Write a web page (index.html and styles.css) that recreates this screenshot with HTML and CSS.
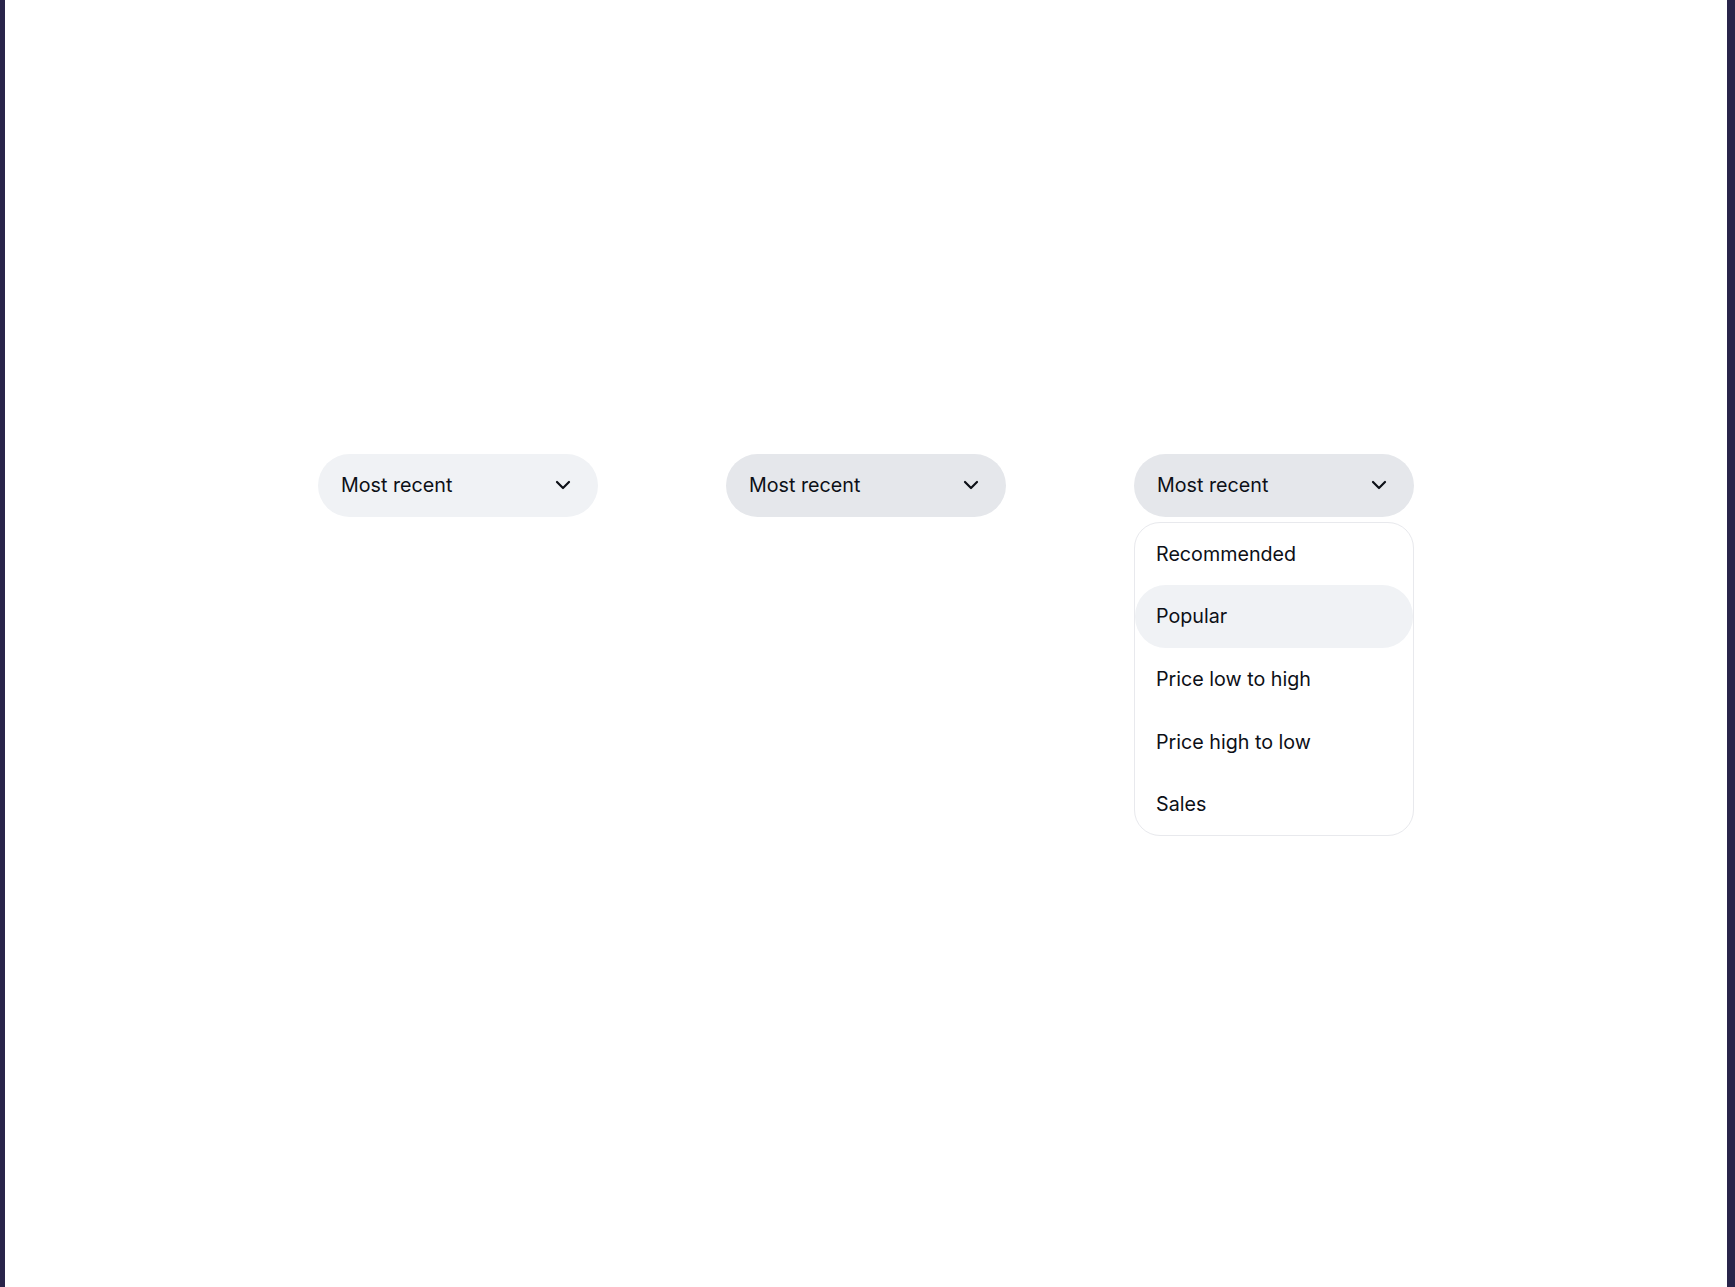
FILE: index.html
```html
<!DOCTYPE html>
<html lang="en">
<head>
<meta charset="utf-8">
<title>Sort dropdowns</title>
<link rel="stylesheet" href="styles.css">
</head>
<body>
<main class="frame">
  <div class="row">
    <div class="col">
      <button class="select select-default" type="button">
        <span class="label">Most recent</span>
        <svg class="chev" viewBox="0 0 24 24" width="24" height="24" aria-hidden="true"><path d="M6 9l6 6 6-6" fill="none" stroke="currentColor" stroke-width="2.2" stroke-linecap="round" stroke-linejoin="round"/></svg>
      </button>
    </div>
    <div class="col">
      <button class="select select-hover" type="button">
        <span class="label">Most recent</span>
        <svg class="chev" viewBox="0 0 24 24" width="24" height="24" aria-hidden="true"><path d="M6 9l6 6 6-6" fill="none" stroke="currentColor" stroke-width="2.2" stroke-linecap="round" stroke-linejoin="round"/></svg>
      </button>
    </div>
    <div class="col">
      <button class="select select-hover" type="button">
        <span class="label">Most recent</span>
        <svg class="chev" viewBox="0 0 24 24" width="24" height="24" aria-hidden="true"><path d="M6 9l6 6 6-6" fill="none" stroke="currentColor" stroke-width="2.2" stroke-linecap="round" stroke-linejoin="round"/></svg>
      </button>
      <ul class="menu">
        <li class="item">Recommended</li>
        <li class="item item-active">Popular</li>
        <li class="item">Price low to high</li>
        <li class="item">Price high to low</li>
        <li class="item">Sales</li>
      </ul>
    </div>
  </div>
</main>
</body>
</html>
```

FILE: styles.css
```css
* { box-sizing: border-box; }
html, body { margin: 0; height: 100%; }
body {
  background: #29244a;
  padding: 0 8px 0 5px;
  font-family: Inter, "Noto Sans", "Liberation Sans", sans-serif;
  color: #0d1017;
}
.frame {
  background: #ffffff;
  height: 100%;
  display: flex;
  align-items: center;
  justify-content: center;
}
.row {
  display: flex;
  gap: 128px;
  align-items: flex-start;
  margin-top: 3px;
}
.col {
  width: 280px;
  display: flex;
  flex-direction: column;
  gap: 5px;
}
.select {
  width: 280px;
  height: 63px;
  border: 0;
  border-radius: 32px;
  padding: 0 23px 0 23px;
  display: flex;
  align-items: center;
  justify-content: space-between;
  font: inherit;
  font-size: 19.7px;
  color: #0d1017;
  cursor: pointer;
}
.select-default { background: #f0f2f5; }
.select-hover { background: #e5e7eb; }
.chev { display: block; color: #0d1017; }
.menu {
  list-style: none;
  margin: 0;
  padding: 0;
  border: 1px solid #e8e9ed;
  border-radius: 26px;
  background: #fff;
  overflow: hidden;
}
.item {
  height: 62.6px;
  display: flex;
  align-items: center;
  padding: 0 21px;
  font-size: 19.7px;
  color: #0d1017;
}
.item-active {
  background: #f0f2f5;
  border-radius: 31px;
}
```
